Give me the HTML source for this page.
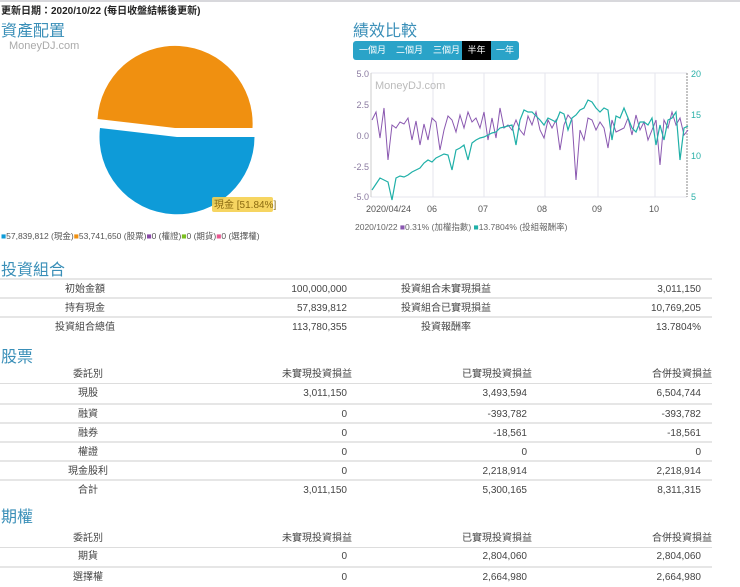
<!DOCTYPE html>
<html><head><meta charset="utf-8"><style>
body{margin:0;width:740px;height:584px;overflow:hidden;background:#fff;font-family:"Liberation Sans","Noto Sans CJK TC",sans-serif;color:#333;position:relative}
.a{position:absolute;white-space:nowrap}
.t{font-size:16px;color:#3a8fb8}
.r{position:absolute;left:0;width:712px;height:19px;font-size:10px;line-height:19px;color:#444;border-top:2px solid #e6e6e6;box-sizing:border-box;white-space:nowrap}
.r span{position:absolute;top:0;white-space:nowrap}
.c{transform:translateX(-50%)}
.rt{transform:translateX(-100%)}
</style></head><body>
<div style="position:absolute;left:0;top:0;width:740px;height:2px;background:#d8d8dc"></div>
<div class="a" style="left:1px;top:2px;font-size:10px;font-weight:bold;color:#222">更新日期：2020/10/22 (每日收盤結帳後更新)</div>
<div class="a t" style="left:1px;top:17px">資產配置</div>
<div class="a" style="left:9px;top:40px;font-size:11px;color:#aaa">MoneyDJ.com</div>
<svg class="a" style="left:0;top:0" width="345" height="250">
<path d="M177,137 L254.5,137 A77.5,77.5 0 1 1 100,128 Z" fill="#0e9bd8"/>
<path d="M175,128 L97.5,119 A77.5,77.5 0 0 1 252.5,128 Z" fill="#f09010"/>
<rect x="212" y="197" width="61" height="15" rx="2" fill="#f5d050" opacity="0.9"/>
<text x="214" y="208" font-size="10" fill="#8a6a10" font-family="Liberation Sans,Noto Sans CJK TC,sans-serif">現金 [51.84%]</text>
</svg>
<div class="a" style="left:1px;top:230px;font-size:8.5px;color:#555"><span style="color:#0e9bd8">■</span>57,839,812 (現金)<span style="color:#f09010">■</span>53,741,650 (股票)<span style="color:#8a4aa8">■</span>0 (權證)<span style="color:#7cc020">■</span>0 (期貨)<span style="color:#e85890">■</span>0 (選擇權)</div>

<div class="a t" style="left:353px;top:17px">績效比較</div>
<div class="a" style="left:353px;top:41px;width:166px;height:19px;background:#2aa3c8;border-radius:3px;font-size:9px;color:#fff;line-height:19px">
<span class="a" style="left:6px">一個月</span><span class="a" style="left:43px">二個月</span><span class="a" style="left:80px">三個月</span>
<span class="a" style="left:109px;width:29px;height:19px;background:#000;text-align:center">半年</span><span class="a" style="left:143px">一年</span></div>
<svg class="a" style="left:345px;top:65px" width="395" height="170" viewBox="345 65 395 170">
<g stroke="#e4e6ee" stroke-width="1">
<line x1="433" y1="73" x2="433" y2="197"/><line x1="484" y1="73" x2="484" y2="197"/><line x1="545" y1="73" x2="545" y2="197"/><line x1="598" y1="73" x2="598" y2="197"/><line x1="655" y1="73" x2="655" y2="197"/>
<line x1="371" y1="73" x2="687" y2="73"/><line x1="371" y1="197" x2="687" y2="197"/></g>
<line x1="371" y1="73" x2="371" y2="197" stroke="#ccc"/>
<line x1="687" y1="73" x2="687" y2="197" stroke="#888" stroke-dasharray="2,1"/>
<g font-size="9" fill="#8a7aa0" font-family="Liberation Sans,sans-serif" text-anchor="end">
<text x="369" y="77">5.0</text><text x="369" y="108">2.5</text><text x="369" y="139">0.0</text><text x="369" y="170">-2.5</text><text x="369" y="200">-5.0</text></g>
<g font-size="9" fill="#2ab0a8" font-family="Liberation Sans,sans-serif">
<text x="691" y="77">20</text><text x="691" y="118">15</text><text x="691" y="159">10</text><text x="691" y="200">5</text></g>
<g font-size="9" fill="#555" font-family="Liberation Sans,sans-serif">
<text x="366" y="212">2020/04/24</text><text x="427" y="212">06</text><text x="478" y="212">07</text><text x="537" y="212">08</text><text x="592" y="212">09</text><text x="649" y="212">10</text></g>
<text x="375" y="89" font-size="11" fill="#bbb" font-family="Liberation Sans,sans-serif">MoneyDJ.com</text>
<polyline fill="none" stroke="#8a58b0" stroke-width="1" points="372,120 376,112 380,138 384,108 388,160 392,125 396,128 400,122 404,124 408,118 412,140 416,121 420,145 424,124 428,140 432,118 436,122 440,150 444,130 448,116 452,120 456,132 460,115 464,128 468,112 472,122 476,118 480,128 484,112 488,140 492,118 496,138 500,108 504,128 508,125 512,130 516,120 520,130 524,135 528,116 532,125 536,112 540,130 544,138 548,120 552,128 556,120 560,150 564,125 568,115 572,120 576,180 580,130 584,140 588,118 592,120 596,130 600,122 604,128 608,148 612,120 616,132 620,130 624,128 628,118 632,135 636,115 640,130 644,122 648,140 652,130 656,120 660,165 664,120 668,128 672,112 676,125 680,118 684,135 688,130"/>
<polyline fill="none" stroke="#20b0a8" stroke-width="1.2" points="372,190 376,184 380,178 384,180 388,182 392,200 396,178 400,176 404,177 408,175 412,172 416,170 420,168 424,163 428,160 432,162 436,158 440,156 444,154 448,155 452,170 456,150 460,148 464,145 468,160 472,143 476,140 480,138 484,137 488,135 492,133 496,132 500,128 504,127 508,126 512,125 516,145 520,120 524,110 528,112 532,112 536,116 540,120 544,125 548,118 552,120 556,122 560,112 564,114 568,130 572,118 576,115 580,110 584,108 588,100 592,102 596,108 600,112 604,108 608,110 612,140 616,116 620,118 624,108 628,118 632,128 636,132 640,122 644,122 648,125 652,118 656,145 660,125 664,140 668,120 672,118 676,112 680,160 684,128 688,126"/>
<g font-size="8.5" fill="#666" font-family="Liberation Sans,Noto Sans CJK TC,sans-serif">
<text x="355" y="230">2020/10/22 <tspan fill="#8a58b0">■</tspan>0.31% (加權指數) <tspan fill="#20b0a8">■</tspan>13.7804% (投組報酬率)</text></g>
</svg>

<div class="a t" style="left:1px;top:256px">投資組合</div>
<div class="r" style="top:278px"><span class="c" style="left:85px">初始金額</span><span class="rt" style="left:347px">100,000,000</span><span class="c" style="left:446px">投資組合未實現損益</span><span class="rt" style="left:701px">3,011,150</span></div>
<div class="r" style="top:297px"><span class="c" style="left:85px">持有現金</span><span class="rt" style="left:347px">57,839,812</span><span class="c" style="left:446px">投資組合已實現損益</span><span class="rt" style="left:701px">10,769,205</span></div>
<div class="r" style="top:316px"><span class="c" style="left:85px">投資組合總值</span><span class="rt" style="left:347px">113,780,355</span><span class="c" style="left:446px">投資報酬率</span><span class="rt" style="left:701px">13.7804%</span></div>

<div class="a t" style="left:1px;top:343px">股票</div>
<div class="r" style="top:365px;border-top:none;border-bottom:1px solid #ddd"><span class="c" style="left:88px">委託別</span><span class="rt" style="left:352px">未實現投資損益</span><span class="rt" style="left:532px">已實現投資損益</span><span class="rt" style="left:712px">合併投資損益</span></div>
<div class="r" style="top:384px;border-top:none"><span class="c" style="left:88px">現股</span><span class="rt" style="left:347px">3,011,150</span><span class="rt" style="left:527px">3,493,594</span><span class="rt" style="left:701px">6,504,744</span></div>
<div class="r" style="top:403px"><span class="c" style="left:88px">融資</span><span class="rt" style="left:347px">0</span><span class="rt" style="left:527px">-393,782</span><span class="rt" style="left:701px">-393,782</span></div>
<div class="r" style="top:422px"><span class="c" style="left:88px">融券</span><span class="rt" style="left:347px">0</span><span class="rt" style="left:527px">-18,561</span><span class="rt" style="left:701px">-18,561</span></div>
<div class="r" style="top:441px"><span class="c" style="left:88px">權證</span><span class="rt" style="left:347px">0</span><span class="rt" style="left:527px">0</span><span class="rt" style="left:701px">0</span></div>
<div class="r" style="top:460px"><span class="c" style="left:88px">現金股利</span><span class="rt" style="left:347px">0</span><span class="rt" style="left:527px">2,218,914</span><span class="rt" style="left:701px">2,218,914</span></div>
<div class="r" style="top:479px"><span class="c" style="left:88px">合計</span><span class="rt" style="left:347px">3,011,150</span><span class="rt" style="left:527px">5,300,165</span><span class="rt" style="left:701px">8,311,315</span></div>

<div class="a t" style="left:1px;top:503px">期權</div>
<div class="r" style="top:529px;border-top:none;border-bottom:1px solid #ddd"><span class="c" style="left:88px">委託別</span><span class="rt" style="left:352px">未實現投資損益</span><span class="rt" style="left:532px">已實現投資損益</span><span class="rt" style="left:712px">合併投資損益</span></div>
<div class="r" style="top:547px;border-top:none"><span class="c" style="left:88px">期貨</span><span class="rt" style="left:347px">0</span><span class="rt" style="left:527px">2,804,060</span><span class="rt" style="left:701px">2,804,060</span></div>
<div class="r" style="top:566px"><span class="c" style="left:88px">選擇權</span><span class="rt" style="left:347px">0</span><span class="rt" style="left:527px">2,664,980</span><span class="rt" style="left:701px">2,664,980</span></div>
</body></html>
